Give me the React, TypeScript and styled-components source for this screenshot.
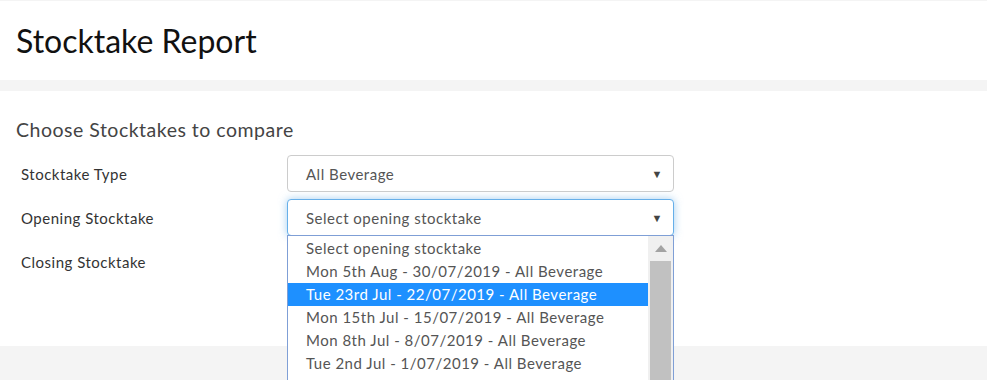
import React from 'react';
import styled, { createGlobalStyle } from 'styled-components';

const GlobalStyle = createGlobalStyle`
  html, body {
    margin: 0;
    padding: 0;
    background: #f4f4f4;
    font-family: Lato, "Noto Sans", sans-serif;
    color: #333;
  }
`;

const stocktakes = [
  'Select opening stocktake',
  'Mon 5th Aug - 30/07/2019 - All Beverage',
  'Tue 23rd Jul - 22/07/2019 - All Beverage',
  'Mon 15th Jul - 15/07/2019 - All Beverage',
  'Mon 8th Jul - 8/07/2019 - All Beverage',
  'Tue 2nd Jul - 1/07/2019 - All Beverage',
  'Mon 24th Jun - 24/06/2019 - All Beverage',
];

const Page = styled.div`
  padding-top: 1px;
  min-height: 380px;
`;

const Header = styled.header`
  background: #fff;
  height: 79px;
  padding: 0 16px;
  display: flex;
  align-items: center;
`;

const Title = styled.h1`
  margin: 0;
  font-size: 32px;
  font-weight: 400;
  color: #111;
`;

const Panel = styled.section`
  background: #fff;
  margin-top: 11px;
  height: 255px;
  padding: 27px 16px 0;
  box-sizing: border-box;
`;

const SubTitle = styled.h2`
  margin: 0 0 13px;
  font-size: 19.5px;
  font-weight: 400;
  color: #444;
  line-height: 24px;
  letter-spacing: 0.5px;
`;

const Form = styled.div`
  display: grid;
  grid-template-columns: 266px 387px;
  row-gap: 7px;
  padding-left: 5px;
`;

const Label = styled.label`
  font-size: 15px;
  color: #333;
  letter-spacing: 0.5px;
  display: flex;
  align-items: center;
  height: 37px;
`;

const Field = styled.div`
  position: relative;
`;

const SelectBox = styled.div<{ $focused?: boolean }>`
  height: 37px;
  box-sizing: border-box;
  border: 1px solid ${({ $focused }) => ($focused ? '#66afe9' : '#ccc')};
  border-radius: 4px;
  box-shadow: ${({ $focused }) =>
    $focused ? '0 0 8px rgba(102, 175, 233, 0.6)' : 'none'};
  background: #fff;
  display: flex;
  align-items: center;
  justify-content: space-between;
  padding: 0 10px 0 18px;
  font-size: 15px;
  letter-spacing: 0.5px;
  color: #555;
`;

const Caret = styled.span`
  font-size: 11px;
  color: #444;
`;

const Dropdown = styled.ul`
  position: absolute;
  top: 36px;
  left: 0;
  width: 387px;
  height: 160px;
  margin: 0;
  padding: 0;
  list-style: none;
  box-sizing: border-box;
  border: 1px solid #7f9fd6;
  border-bottom: none;
  background: #fff;
  overflow: hidden;
  z-index: 10;
  display: flex;
`;

const Options = styled.div`
  flex: 1;
  padding-top: 1px;
`;

const Option = styled.li<{ $selected?: boolean }>`
  height: 23px;
  line-height: 23px;
  padding-left: 18px;
  font-size: 15px;
  letter-spacing: 0.5px;
  white-space: nowrap;
  color: ${({ $selected }) => ($selected ? '#fff' : '#555')};
  background: ${({ $selected }) => ($selected ? '#1e90ff' : 'transparent')};
`;

const Scrollbar = styled.div`
  width: 25px;
  background: #f0f0f0;
  display: flex;
  flex-direction: column;
  align-items: center;
`;

const ScrollArrow = styled.div`
  height: 25px;
  display: flex;
  align-items: center;
  justify-content: center;
`;

const Thumb = styled.div`
  width: 21px;
  flex: 1;
  background: #c1c1c1;
`;

export default function App() {
  return (
    <Page>
      <GlobalStyle />
      <Header>
        <Title>Stocktake Report</Title>
      </Header>
      <Panel>
        <SubTitle>Choose Stocktakes to compare</SubTitle>
        <Form>
          <Label>Stocktake Type</Label>
          <Field>
            <SelectBox>
              All Beverage
              <Caret>▼</Caret>
            </SelectBox>
          </Field>

          <Label>Opening Stocktake</Label>
          <Field>
            <SelectBox $focused>
              Select opening stocktake
              <Caret>▼</Caret>
            </SelectBox>
            <Dropdown>
              <Options>
                {stocktakes.map((s, i) => (
                  <Option key={s} $selected={i === 2}>
                    {s}
                  </Option>
                ))}
              </Options>
              <Scrollbar>
                <ScrollArrow>
                  <svg width="12" height="7" viewBox="0 0 12 7">
                    <path d="M0 7 L6 0 L12 7 Z" fill="#a3a3a3" />
                  </svg>
                </ScrollArrow>
                <Thumb />
              </Scrollbar>
            </Dropdown>
          </Field>

          <Label>Closing Stocktake</Label>
          <Field>
            <SelectBox />
          </Field>
        </Form>
      </Panel>
    </Page>
  );
}
